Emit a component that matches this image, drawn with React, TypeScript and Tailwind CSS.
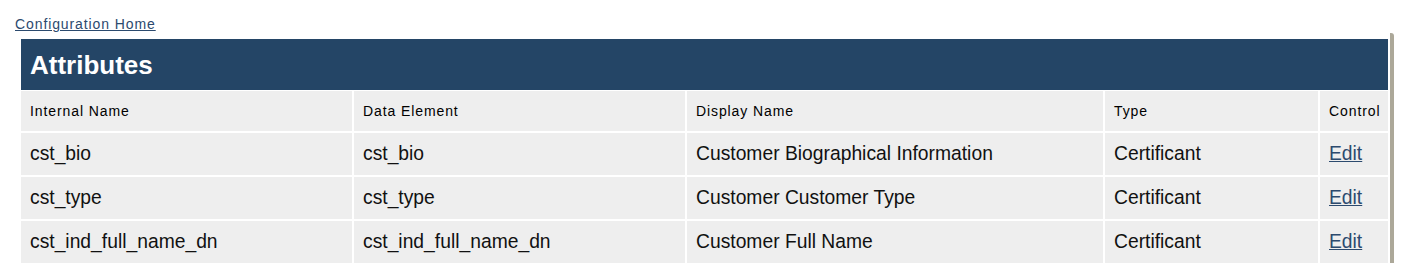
import React from 'react';

type Attribute = {
    internalName: string;
    dataElement: string;
    displayName: string;
    type: string;
};

const attributes: Attribute[] = [
    { internalName: 'cst_bio', dataElement: 'cst_bio', displayName: 'Customer Biographical Information', type: 'Certificant' },
    { internalName: 'cst_type', dataElement: 'cst_type', displayName: 'Customer Customer Type', type: 'Certificant' },
    { internalName: 'cst_ind_full_name_dn', dataElement: 'cst_ind_full_name_dn', displayName: 'Customer Full Name', type: 'Certificant' },
];

const columns = ['Internal Name', 'Data Element', 'Display Name', 'Type', 'Control'];

const headCell = 'h-[40px] bg-[#eeeeee] flex items-center pl-[9px] pt-[1px] text-[14px] tracking-[0.9px] text-black';
const bodyCell = 'h-[42px] bg-[#eeeeee] flex items-center pl-[9px] text-[19.3px] text-[#111111]';

export default function App() {
    return (
        <div className="min-h-screen bg-white font-['Liberation_Sans',Arial,sans-serif]">
            <div className="pt-[16px] pl-[15px] text-[14px] leading-[16px]">
                <a href="#" className="tracking-[0.9px] text-[#2c4a6e] underline">Configuration Home</a>
            </div>

            <div className="mt-[1px] ml-[21px] w-[1373px] pt-[6px] pr-[2px] border-r-[4px] border-[#aca899] rounded-tr-[3px]">
                <div className="h-[51px] bg-[#244566] flex items-center pl-[9px]">
                    <h2 className="text-[26px] leading-[30px] font-bold text-white">Attributes</h2>
                </div>

                <div className="mt-[1px] grid grid-cols-[331px_331px_416px_213px_1fr] gap-[2px]">
                    {columns.map(c => (
                        <div key={c} className={headCell}>{c}</div>
                    ))}
                    {attributes.map(a => (
                        <React.Fragment key={a.internalName}>
                            <div className={bodyCell}>{a.internalName}</div>
                            <div className={bodyCell}>{a.dataElement}</div>
                            <div className={bodyCell}>{a.displayName}</div>
                            <div className={bodyCell}>{a.type}</div>
                            <div className={bodyCell}>
                                <a href="#" className="text-[#2c4a6e] underline">Edit</a>
                            </div>
                        </React.Fragment>
                    ))}
                </div>
            </div>
        </div>
    );
}
